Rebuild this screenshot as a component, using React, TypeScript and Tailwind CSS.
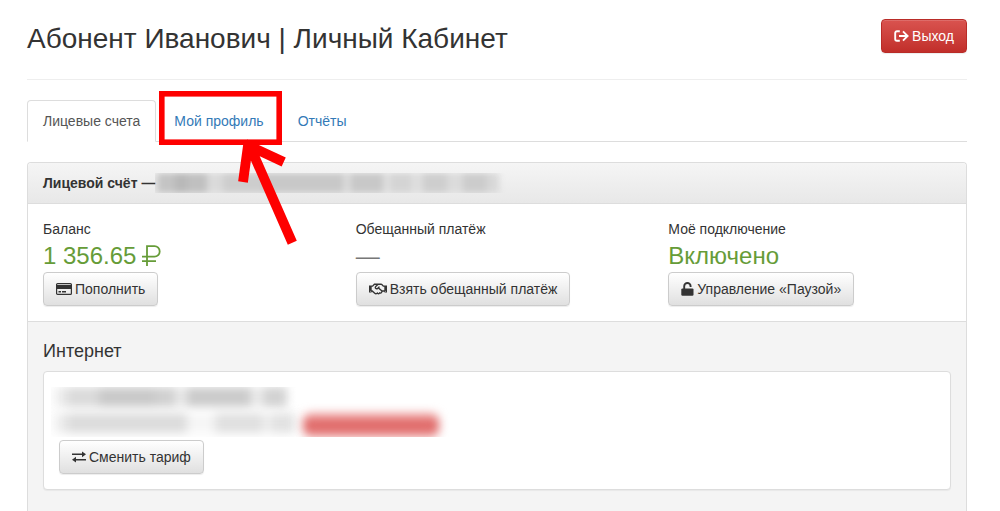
import type { ReactNode } from 'react';
import { FaRegHandshake } from 'react-icons/fa';

type Smudge = { width: string; color: string };

const accountSmudges: Smudge[] = [
  { width: 'w-1', color: 'bg-[#d4d4d4]' },
  { width: 'w-4', color: 'bg-[#c4c4c4]' },
  { width: 'w-3', color: 'bg-[#b8b8b8]' },
  { width: 'w-5', color: 'bg-[#c0c0c0]' },
  { width: 'w-4', color: 'bg-[#dadada]' },
  { width: 'w-10', color: 'bg-[#cdcdcd]' },
  { width: 'w-20', color: 'bg-[#c8c8c8]' },
  { width: 'w-2', color: 'bg-[#dadada]' },
  { width: 'w-8', color: 'bg-[#c8c8c8]' },
  { width: 'w-2', color: 'bg-[#dedede]' },
  { width: 'w-5', color: 'bg-[#d4d4d4]' },
  { width: 'w-3', color: 'bg-[#dedede]' },
  { width: 'w-6', color: 'bg-[#cecece]' },
  { width: 'w-4', color: 'bg-[#dbdbdb]' },
  { width: 'w-6', color: 'bg-[#cccccc]' },
  { width: 'w-3', color: 'bg-[#d8d8d8]' },
];

const tariffSmudges: Smudge[] = [
  { width: 'w-3', color: 'bg-[#ececec]' },
  { width: 'w-8', color: 'bg-[#dadada]' },
  { width: 'w-14', color: 'bg-[#c9c9c9]' },
  { width: 'w-5', color: 'bg-[#d0d0d0]' },
  { width: 'w-3', color: 'bg-[#e8e8e8]' },
  { width: 'w-16', color: 'bg-[#cbcbcb]' },
  { width: 'w-3', color: 'bg-[#ececec]' },
  { width: 'w-6', color: 'bg-[#d2d2d2]' },
];

const detailSmudges: Smudge[] = [
  { width: 'w-3', color: 'bg-[#ececec]' },
  { width: 'w-14', color: 'bg-[#dcdcdc]' },
  { width: 'w-16', color: 'bg-[#dcdcdc]' },
  { width: 'w-7', color: 'bg-[#f6f6f6]' },
  { width: 'w-12', color: 'bg-[#e0e0e0]' },
  { width: 'w-2', color: 'bg-[#f0f0f0]' },
  { width: 'w-6', color: 'bg-[#e2e2e2]' },
];

function Smudges({ items, size }: { items: Smudge[]; size: string }) {
  return (
    <span className={`flex ${size}`} aria-hidden="true">
      {items.map((s, i) => (
        <span key={i} className={`shrink-0 ${s.width} ${s.color}`} />
      ))}
    </span>
  );
}

function GreyButton({ icon, children }: { icon: ReactNode; children: ReactNode }) {
  return (
    <button
      type="button"
      className="inline-flex items-center gap-[3px] rounded border border-[#ccc] bg-linear-to-b from-white to-[#e0e0e0] px-3 py-1.5 text-[#333] shadow-[inset_0_1px_0_rgba(255,255,255,0.15),0_1px_1px_rgba(0,0,0,0.075)]"
    >
      {icon}
      {children}
    </button>
  );
}

function RubleIcon() {
  return (
    <svg width="19" height="22" viewBox="0 0 19 22" fill="none" stroke="currentColor" strokeWidth="1.8">
      <path d="M5 21V1.2h7.5a5.2 5.2 0 0 1 0 10.4H0M0 16.2h14" />
    </svg>
  );
}

function CreditCardIcon() {
  return (
    <svg width="16" height="12" viewBox="0 0 16 12" fill="none" aria-hidden="true">
      <rect x="0.6" y="0.6" width="14.8" height="10.8" rx="1" stroke="currentColor" strokeWidth="1.2" />
      <path d="M0.6 2h14.8v4H0.6z" fill="currentColor" />
      <path d="M2.5 8.7h2.5M6 8.7h4" stroke="currentColor" strokeWidth="1.4" />
    </svg>
  );
}

function SignOutIcon() {
  return (
    <svg width="15" height="12" viewBox="0 0 15 12" fill="none" stroke="currentColor" strokeWidth="1.9">
      <path d="M5.8 1.2H3A1.8 1.8 0 0 0 1.2 3v6A1.8 1.8 0 0 0 3 10.8h2.8" />
      <path d="M5 6h8.4M9 1.4L13.6 6L9 10.6" />
    </svg>
  );
}

function UnlockIcon() {
  return (
    <svg width="13" height="14" viewBox="0 0 13 14" fill="none" aria-hidden="true">
      <path d="M3.2 7V4.2a3.2 3.2 0 0 1 6.4 0v0.9" stroke="currentColor" strokeWidth="1.9" />
      <rect x="0.3" y="6.4" width="12.2" height="7.4" rx="1.2" fill="currentColor" />
    </svg>
  );
}

function ExchangeIcon() {
  return (
    <svg width="14" height="12" viewBox="0 0 14 12" fill="none" stroke="currentColor" strokeWidth="1.5">
      <path d="M0 3.3h12M2 8.7h12" />
      <path d="M10 0.4L14 3.3l-4 2.9zM4 5.8L0 8.7l4 2.9z" fill="currentColor" stroke="none" />
    </svg>
  );
}

// Red frame and arrow pointing at the profile tab
function TabHint() {
  return (
    <svg
      className="pointer-events-none absolute -top-2.5 left-0 z-10"
      width="140"
      height="160"
      viewBox="0 0 140 160"
      fill="none"
      stroke="#fe0000"
      aria-hidden="true"
    >
      <rect x="3.8" y="3.8" width="117.4" height="48.4" strokeWidth="5.6" />
      <path d="M91 54l43.3 98.7M90.5 52L85 92M87 54l38.7 18" strokeWidth="9.8" />
    </svg>
  );
}

function Column({ label, value, children }: { label: string; value: ReactNode; children: ReactNode }) {
  return (
    <div className="px-[15px]">
      <p>{label}</p>
      {value}
      {children}
    </div>
  );
}

export default function App() {
  return (
    <div className="flex min-h-screen flex-col bg-white pt-[19px] pr-[33px] pl-[27px] font-['Liberation_Sans',Arial,sans-serif] text-sm leading-5 text-[#333]">
      <header className="flex items-start justify-between border-b border-[#eee] pb-5">
        <h1 className="text-[28px] leading-10">Абонент Иванович | Личный Кабинет</h1>
        <button
          type="button"
          className="inline-flex items-center gap-[3px] rounded border border-[#b92c28] bg-linear-to-b from-[#d9534f] to-[#c12e2a] px-3 py-1.5 text-white shadow-[inset_0_1px_0_rgba(255,255,255,0.15),0_1px_1px_rgba(0,0,0,0.075)]"
        >
          <SignOutIcon />
          Выход
        </button>
      </header>

      <nav className="mt-5 border-b border-[#ddd]">
        <ul className="-mb-px flex gap-0.5">
          <li>
            <a href="#accounts" className="block rounded-t border border-[#ddd] border-b-white bg-white px-[15px] py-2.5 text-[#555]">
              Лицевые счета
            </a>
          </li>
          <li className="relative">
            <a href="#profile" className="block border border-transparent px-[15px] py-2.5 text-[#337ab7]">
              Мой профиль
            </a>
            <TabHint />
          </li>
          <li>
            <a href="#reports" className="block border border-transparent px-[15px] py-2.5 text-[#337ab7]">
              Отчёты
            </a>
          </li>
        </ul>
      </nav>

      <main className="mt-5 flex flex-1 flex-col rounded-t border border-b-0 border-[#ddd]">
        <h2 className="flex items-center rounded-t border-b border-[#ddd] bg-linear-to-b from-[#f5f5f5] to-[#e8e8e8] px-[15px] py-2.5 font-bold">
          Лицевой счёт —
          <span className="overflow-hidden pr-2">
            <Smudges items={accountSmudges} size="h-5 blur-[3px]" />
          </span>
        </h2>

        <section className="grid grid-cols-3 border-b border-[#ddd] py-[15px]">
          <Column
            label="Баланс"
            value={
              <p className="flex items-center gap-1.5 text-2xl leading-[33px] text-[#669c38]">
                1 356.65
                <RubleIcon />
              </p>
            }
          >
            <GreyButton icon={<CreditCardIcon />}>Пополнить</GreyButton>
          </Column>
          <Column label="Обещанный платёж" value={<p className="text-2xl leading-[33px] text-[#777]">—</p>}>
            <GreyButton icon={<FaRegHandshake size={18} />}>Взять обещанный платёж</GreyButton>
          </Column>
          <Column label="Моё подключение" value={<p className="text-2xl leading-[33px] text-[#669c38]">Включено</p>}>
            <GreyButton icon={<UnlockIcon />}>Управление «Паузой»</GreyButton>
          </Column>
        </section>

        <section className="flex-1 bg-[#f4f4f4] px-[15px] pt-[19px] pb-5">
          <h3 className="text-lg leading-5">Интернет</h3>
          <div className="mt-2.5 rounded border border-[#ddd] bg-white p-[15px] shadow-[0_1px_1px_rgba(0,0,0,0.05)]">
            <div className="-ml-2 flex flex-col overflow-hidden pl-1">
              <Smudges items={tariffSmudges} size="h-5 blur-[5px]" />
              <div className="mt-1.5 flex items-start">
                <Smudges items={detailSmudges} size="h-5 blur-[5px]" />
                <span className="ml-2 h-6 w-34 rounded-lg bg-linear-to-b from-[#f0aaaa] via-[#dc5c5c] to-[#eb9696] blur-[5px]" aria-hidden="true" />
              </div>
            </div>
            <div className="mt-[3px]">
              <GreyButton icon={<ExchangeIcon />}>Сменить тариф</GreyButton>
            </div>
          </div>
        </section>
      </main>
    </div>
  );
}
